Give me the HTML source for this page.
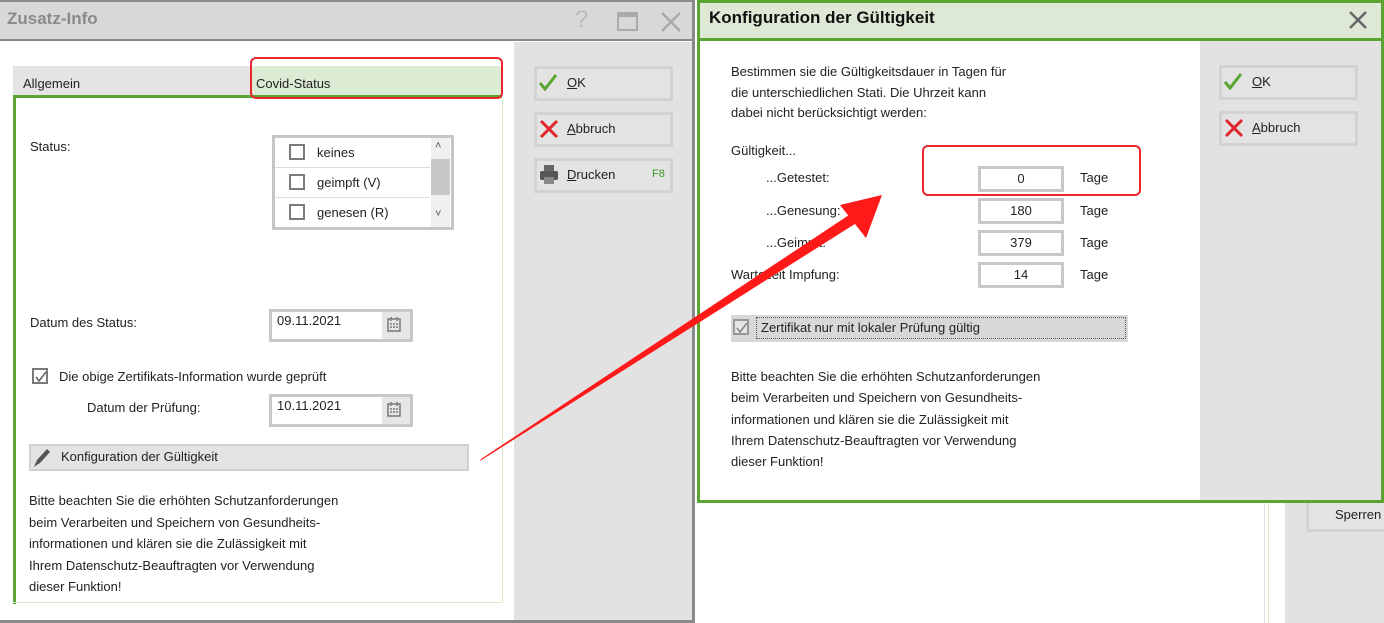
<!DOCTYPE html>
<html><head><meta charset="utf-8"><style>
*{box-sizing:border-box;margin:0;padding:0}
body{width:1384px;height:623px;position:relative;overflow:hidden;background:#fff;font-family:"Liberation Sans",sans-serif;font-size:13px;color:#222}
.a{position:absolute}
.btn{position:absolute;background:#e3e3e3;border:3px solid #d2d2d2;font-size:13px}
.inp{position:absolute;background:#fff;border:3px solid #c8c8c8;text-align:center;font-size:13px;line-height:20px}
.cb{position:absolute;width:16px;height:16px;border:2px solid #7a7a7a;background:#fff}
.t{position:absolute;white-space:nowrap}
</style></head><body>
<!-- left dialog -->
<div class="a" style="left:0;top:0;width:694px;height:623px;background:#fff"></div>
<div class="a" style="left:0;top:0;width:694px;height:41px;background:#d8d8d8;border-top:2px solid #8a8a8a;border-bottom:2px solid #8a8a8a"></div>
<div class="t" style="left:7px;top:9px;font-size:17px;font-weight:bold;color:#8a8a8a">Zusatz-Info</div>
<div class="t" style="left:575px;top:6px;font-size:24px;color:#bbb">?</div>
<div class="a" style="left:617px;top:12px;width:21px;height:19px;border:2px solid #aaa;border-top-width:5px"></div>
<svg class="a" style="left:660px;top:11px" width="22" height="22"><path d="M2 2L20 20M20 2L2 20" stroke="#aaa" stroke-width="2.5"/></svg>
<div class="a" style="left:514px;top:42px;width:180px;height:581px;background:#e2e2e2"></div>
<div class="a" style="left:692px;top:0;width:3px;height:623px;background:#8a8a8a"></div>
<div class="a" style="left:0;top:620px;width:694px;height:3px;background:#8a8a8a"></div>
<!-- tabs -->
<div class="a" style="left:13px;top:66px;width:489px;height:30px;background:#e4e4e4"></div>
<div class="a" style="left:250px;top:66px;width:252px;height:30px;background:#dcebd3"></div>
<div class="t" style="left:23px;top:76px">Allgemein</div>
<div class="t" style="left:256px;top:76px">Covid-Status</div>
<div class="a" style="left:13px;top:95px;width:489px;height:3px;background:#5aa532"></div>
<div class="a" style="left:13px;top:95px;width:3px;height:509px;background:#5aa532"></div>
<div class="a" style="left:13px;top:602px;width:490px;height:1px;background:#d5e8cb"></div>
<div class="a" style="left:502px;top:98px;width:1px;height:505px;background:#d5e8cb"></div>
<div class="a" style="left:250px;top:57px;width:253px;height:42px;border:2px solid #e8262b;border-radius:6px"></div>
<div class="t" style="left:30px;top:139px">Status:</div>
<div class="a" style="left:272px;top:135px;width:182px;height:95px;border:3px solid #c6c6c6;background:#fff"></div>
<div class="a" style="left:431px;top:138px;width:19px;height:89px;background:#f0f0f0"></div>
<div class="a" style="left:431px;top:159px;width:19px;height:36px;background:#c8c8c8"></div>
<div class="t" style="left:435px;top:140px;font-size:11px;color:#555">&#708;</div>
<div class="t" style="left:435px;top:208px;font-size:11px;color:#555">&#709;</div>
<div class="a" style="left:275px;top:167px;width:155px;height:1px;background:#ddd"></div>
<div class="a" style="left:275px;top:197px;width:155px;height:1px;background:#ddd"></div>
<div class="cb" style="left:289px;top:144px"></div><div class="t" style="left:317px;top:145px">keines</div>
<div class="cb" style="left:289px;top:174px"></div><div class="t" style="left:317px;top:175px">geimpft (V)</div>
<div class="cb" style="left:289px;top:204px"></div><div class="t" style="left:317px;top:205px">genesen (R)</div>
<div class="t" style="left:30px;top:315px">Datum des Status:</div>
<div class="a" style="left:269px;top:309px;width:144px;height:33px;background:#c8c8c8"></div>
<div class="a" style="left:272px;top:312px;width:110px;height:27px;background:#fff"></div>
<div class="a" style="left:382px;top:312px;width:28px;height:27px;background:#e6e6e6"></div>
<div class="t" style="left:277px;top:313px">09.11.2021</div>
<svg class="a" style="left:387px;top:316px" width="14" height="16"><rect x="1" y="3" width="12" height="12" fill="none" stroke="#777" stroke-width="1.5"/><path d="M4 1v4M10 1v4M3 8h8M3 11h8" stroke="#777" stroke-width="1.5" stroke-dasharray="2 1"/></svg>
<div class="cb" style="left:32px;top:368px"></div>
<svg class="a" style="left:34px;top:370px" width="14" height="14"><path d="M2 7l3 4 7-9" fill="none" stroke="#666" stroke-width="1.6"/></svg>
<div class="t" style="left:59px;top:369px">Die obige Zertifikats-Information wurde geprüft</div>
<div class="t" style="left:87px;top:400px">Datum der Prüfung:</div>
<div class="a" style="left:269px;top:394px;width:144px;height:33px;background:#c8c8c8"></div>
<div class="a" style="left:272px;top:397px;width:110px;height:27px;background:#fff"></div>
<div class="a" style="left:382px;top:397px;width:28px;height:27px;background:#e6e6e6"></div>
<div class="t" style="left:277px;top:398px">10.11.2021</div>
<svg class="a" style="left:387px;top:401px" width="14" height="16"><rect x="1" y="3" width="12" height="12" fill="none" stroke="#777" stroke-width="1.5"/><path d="M4 1v4M10 1v4M3 8h8M3 11h8" stroke="#777" stroke-width="1.5" stroke-dasharray="2 1"/></svg>
<div class="a" style="left:29px;top:444px;width:440px;height:27px;background:#e3e3e3;border:2px solid #d0d0d0"></div>
<svg class="a" style="left:32px;top:446px" width="20" height="22"><path d="M3 20l2-6L15 3l3 3L8 17z" fill="#555"/><path d="M2 21l2-5 2 2z" fill="#555"/></svg>
<div class="t" style="left:61px;top:449px">Konfiguration der Gültigkeit</div>
<div class="t" style="left:29px;top:490px;line-height:21.5px">Bitte beachten Sie die erhöhten Schutzanforderungen<br>beim Verarbeiten und Speichern von Gesundheits-<br>informationen und klären sie die Zulässigkeit mit<br>Ihrem Datenschutz-Beauftragten vor Verwendung<br>dieser Funktion!</div>
<div class="btn" style="left:534px;top:66px;width:139px;height:35px"></div>
<svg class="a" style="left:538px;top:73px" width="20" height="18"><path d="M2 10l5 6L18 2" fill="none" stroke="#5aa532" stroke-width="3"/></svg>
<div class="t" style="left:567px;top:75px"><u>O</u>K</div>
<div class="btn" style="left:534px;top:112px;width:139px;height:35px"></div>
<svg class="a" style="left:539px;top:119px" width="20" height="20"><path d="M2 2L18 18M18 2L2 18" stroke="#e0262b" stroke-width="3"/></svg>
<div class="t" style="left:567px;top:121px"><u>A</u>bbruch</div>
<div class="btn" style="left:534px;top:158px;width:139px;height:35px"></div>
<svg class="a" style="left:539px;top:164px" width="20" height="22"><rect x="5" y="1" width="10" height="6" fill="#666"/><rect x="1" y="7" width="18" height="9" rx="2" fill="#555"/><rect x="5" y="13" width="10" height="7" fill="#888"/></svg>
<div class="t" style="left:567px;top:167px"><u>D</u>rucken</div>
<div class="t" style="left:652px;top:168px;font-size:11px;color:#3a9a2a">F8</div>

<!-- background stuff right -->
<div class="a" style="left:1264px;top:500px;width:1px;height:123px;background:#e2e2e2"></div>
<div class="a" style="left:1268px;top:500px;width:1px;height:123px;background:#d5e8cb"></div>
<div class="a" style="left:1285px;top:500px;width:99px;height:123px;background:#e2e2e2"></div>
<div class="btn" style="left:1306px;top:498px;width:82px;height:34px"></div>
<div class="t" style="left:1335px;top:507px">Sperren</div>

<!-- right dialog -->
<div class="a" style="left:697px;top:0;width:687px;height:503px;background:#fff;border:3px solid #5aa532"></div>
<div class="a" style="left:700px;top:3px;width:681px;height:36px;background:#dde9d5"></div>
<div class="a" style="left:700px;top:38px;width:681px;height:3px;background:#5aa532"></div>
<div class="t" style="left:709px;top:8px;font-size:17px;font-weight:bold;color:#111">Konfiguration der Gültigkeit</div>
<svg class="a" style="left:1348px;top:10px" width="20" height="20"><path d="M2 2L18 18M18 2L2 18" stroke="#666" stroke-width="2.5"/></svg>
<div class="a" style="left:1200px;top:41px;width:181px;height:459px;background:#e2e2e2"></div>
<div class="t" style="left:731px;top:62px;line-height:20.5px">Bestimmen sie die Gültigkeitsdauer in Tagen für<br>die unterschiedlichen Stati. Die Uhrzeit kann<br>dabei nicht berücksichtigt werden:</div>
<div class="t" style="left:731px;top:143px">Gültigkeit...</div>
<div class="t" style="left:766px;top:170px">...Getestet:</div>
<div class="t" style="left:766px;top:203px">...Genesung:</div>
<div class="t" style="left:766px;top:235px">...Geimpft:</div>
<div class="t" style="left:731px;top:267px">Wartezeit Impfung:</div>
<div class="inp" style="left:978px;top:166px;width:86px;height:26px">0</div>
<div class="inp" style="left:978px;top:198px;width:86px;height:26px">180</div>
<div class="inp" style="left:978px;top:230px;width:86px;height:26px">379</div>
<div class="inp" style="left:978px;top:262px;width:86px;height:26px">14</div>
<div class="t" style="left:1080px;top:170px">Tage</div>
<div class="t" style="left:1080px;top:203px">Tage</div>
<div class="t" style="left:1080px;top:235px">Tage</div>
<div class="t" style="left:1080px;top:267px">Tage</div>
<div class="a" style="left:922px;top:145px;width:219px;height:51px;border:2px solid #e8262b;border-radius:6px"></div>
<div class="a" style="left:731px;top:315px;width:397px;height:27px;background:#d8d8d8"></div>
<div class="a" style="left:756px;top:317px;width:370px;height:22px;border:1px dotted #555"></div>
<div class="cb" style="left:733px;top:319px;border-color:#999;background:#e6e6e6"></div>
<svg class="a" style="left:735px;top:321px" width="14" height="14"><path d="M2 7l3 4 7-9" fill="none" stroke="#888" stroke-width="1.6"/></svg>
<div class="t" style="left:761px;top:320px">Zertifikat nur mit lokaler Prüfung gültig</div>
<div class="t" style="left:731px;top:366px;line-height:21.3px">Bitte beachten Sie die erhöhten Schutzanforderungen<br>beim Verarbeiten und Speichern von Gesundheits-<br>informationen und klären sie die Zulässigkeit mit<br>Ihrem Datenschutz-Beauftragten vor Verwendung<br>dieser Funktion!</div>
<div class="btn" style="left:1219px;top:65px;width:139px;height:35px"></div>
<svg class="a" style="left:1223px;top:72px" width="20" height="18"><path d="M2 10l5 6L18 2" fill="none" stroke="#5aa532" stroke-width="3"/></svg>
<div class="t" style="left:1252px;top:74px"><u>O</u>K</div>
<div class="btn" style="left:1219px;top:111px;width:139px;height:35px"></div>
<svg class="a" style="left:1224px;top:118px" width="20" height="20"><path d="M2 2L18 18M18 2L2 18" stroke="#e0262b" stroke-width="3"/></svg>
<div class="t" style="left:1252px;top:120px"><u>A</u>bbruch</div>

<!-- arrow -->
<svg class="a" style="left:0;top:0" width="1384" height="623"><path d="M480 461L481 459L852 213L858 222Z" fill="#ff1a1a"/><path d="M882 195L840 205L866 238Z" fill="#ff1a1a"/></svg>
</body></html>
